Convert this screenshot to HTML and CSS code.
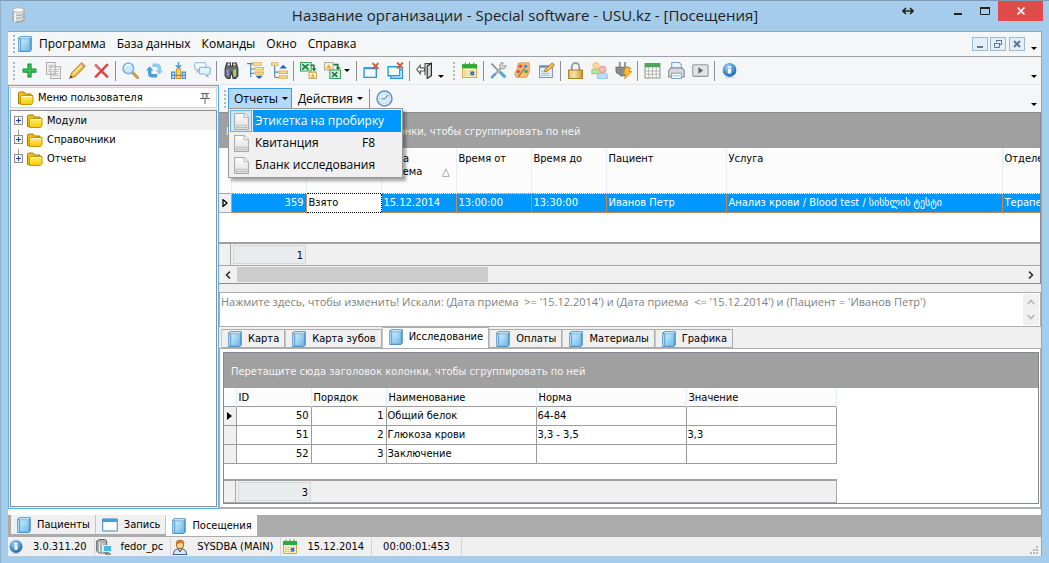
FILE: index.html
```html
<!DOCTYPE html>
<html lang="ru">
<head>
<meta charset="utf-8">
<meta name="viewport" content="width=device-width, initial-scale=1">
<title>Название организации - Special software - USU.kz - [Посещения]</title>
<link rel="stylesheet" href="styles.css">
</head>
<body>
<svg class="defs" aria-hidden="true">
  <defs>
    <linearGradient id="gBlue" x1="0" y1="0" x2="1" y2="1"><stop offset="0" stop-color="#cdeefb"/><stop offset="1" stop-color="#6fb6e6"/></linearGradient>
    <linearGradient id="gFolder" x1="0" y1="0" x2="0" y2="1"><stop offset="0" stop-color="#fff27a"/><stop offset="1" stop-color="#f5c800"/></linearGradient>
    <linearGradient id="gPage" x1="0" y1="0" x2="0" y2="1"><stop offset="0" stop-color="#fff"/><stop offset="1" stop-color="#dcdcdc"/></linearGradient>
    <radialGradient id="gInfo" cx=".4" cy=".3" r=".7"><stop offset="0" stop-color="#9fd6fa"/><stop offset="1" stop-color="#1868b4"/></radialGradient>
    <linearGradient id="gLock" x1="0" y1="0" x2="1" y2="0"><stop offset="0" stop-color="#e3c269"/><stop offset=".4" stop-color="#f7e3a4"/><stop offset="1" stop-color="#c79b35"/></linearGradient>
  </defs>
  <symbol id="book" viewBox="0 0 14 16"><path d="M.7 2L2 .7h11.300v13.300L12 15.500H.7z" fill="#4c98d4" stroke="#3f86c0" stroke-width=".8"/><path d="M1.500 3v12" stroke="#a9d6f2" stroke-width="1.200"/><path d="M3 3h8.700v11.500H3z" fill="url(#gBlue)" stroke="#7fbde6" stroke-width=".8"/><path d="M2 1.800h10.500" stroke="#e3f4fc" stroke-width="1.200"/></symbol>
  <symbol id="folder" viewBox="0 0 16 14"><path d="M.5 12.500V2l1-1h4.500l1.500 2h5.500v10z" fill="#f3bd11" stroke="#a87a00"/><path d="M2.500 13.500V5.500l1-1h11.500v7l-1.500 2z" fill="url(#gFolder)" stroke="#c99500"/><path d="M4 5.500h10" stroke="#fffbc8"/></symbol>
  <symbol id="doc" viewBox="0 0 16 16"><path d="M1.500.5h9l4 4v11h-13z" fill="url(#gPage)" stroke="#a9a9a9"/><path d="M10.500.5v4h4" fill="#fff" stroke="#b5b5b5"/><path d="M3.500 11.500h9v2h-9z" fill="#f3f3f3" stroke="#bdbdbd"/></symbol>
  <symbol id="db" viewBox="0 0 14 16"><path d="M1 3v10c0 3.300 11 3.300 11 0V3z" fill="#e2e2e2" stroke="#9c9c9c"/><ellipse cx="6.500" cy="3" rx="5.500" ry="2.200" fill="#f9f9f9" stroke="#b5b5b5"/><path d="M1 6c0 3 11 3 11 0M1 9c0 3 11 3 11 0M1 12c0 3 11 3 11 0" fill="none" stroke="#9b9b9b"/><path d="M3 6v9" stroke="#fff" stroke-width="2" opacity=".7"/></symbol>
  <symbol id="plus" viewBox="0 0 16 16"><path d="M6.500 2h3v4.500H14v3H9.500V14h-3V9.500H2v-3h4.500z" fill="#3fc35a" stroke="#13942f"/></symbol>
  <symbol id="copy" viewBox="0 0 16 16"><path d="M1.500.5h8v11h-8zM5.500 4.500h9v11h-9z" fill="#f7f7f7" stroke="#ababab"/><path d="M3 3h5M3 5h2M3 7h2M3 9h2M7 7h6M7 9h6M7 11h6M7 13h6" stroke="#bdbdbd"/></symbol>
  <symbol id="pencil" viewBox="0 0 16 16"><path d="M.7 15.300l1.800-5 9.500-9.500 3.200 3.200-9.500 9.500z" fill="#f8c548" stroke="#c78a22"/><path d="M10.500 2.300l3.200 3.200 1.600-1.600L12 .7z" fill="#e59583"/><path d="M4 11l8-8" stroke="#fff0a8" stroke-width="1.300"/><path d="M.7 15.300l1-2.800 1.800 1.800z" fill="#444"/></symbol>
  <symbol id="cross" viewBox="0 0 16 16"><path d="M2 2.500l12 12M14 2L2 14.500" stroke="#dc4242" stroke-width="2.200"/><path d="M2 2.500l5 5" stroke="#f08585"/></symbol>
  <symbol id="lens" viewBox="0 0 16 16"><path d="M10 10l5 5" stroke="#cf9a55" stroke-width="3" stroke-linecap="round"/><circle cx="6" cy="6" r="5" fill="#c7e9fb" stroke="#7db4de" stroke-width="1.500"/><path d="M3 5a3.500 3.500 0 0 1 5-2" fill="none" stroke="#fff" stroke-width="1.500"/></symbol>
  <symbol id="refresh" viewBox="0 0 16 16"><path d="M12.500 9V5.500Q12.500 3 10 3H6" fill="none" stroke="#8ccbf2" stroke-width="3.200"/><path d="M9 8h7l-3.500 4z" fill="#8ccbf2"/><path d="M3.500 7v3.500Q3.500 13 6 13h4.500" fill="none" stroke="#469fdc" stroke-width="3.200"/><path d="M0 8h7L3.500 4z" fill="#469fdc"/></symbol>
  <symbol id="columns" viewBox="0 0 16 16"><path d="M8 0v5M5.500 3L8 5.500 10.500 3" fill="none" stroke="#4a9bd6" stroke-width="1.400"/><path d="M1.500 9.500h3v6h-3zM11.500 9.500h3v6h-3z" fill="#bfe2fa" stroke="#3a8bd1"/><path d="M6 6.500h4v9H6z" fill="#f9d55b" stroke="#d79a1e"/><path d="M1 12.500h14" stroke="#3a8bd1"/></symbol>
  <symbol id="chat" viewBox="0 0 16 16"><path d="M2 .7h8q1.300 0 1.300 1.300v3.500q0 1.500-1.300 1.500H5L3 9.500V7H2Q.7 7 .7 5.500V2Q.7.7 2 .7z" fill="#f3f9fe" stroke="#8cb9e0"/><path d="M6.500 5h7.500q1.300 0 1.300 1.300V10q0 1.300-1.300 1.300h-1V14l-3-2.700H6.500Q5 11.300 5 10V6.300Q5 5 6.500 5z" fill="#e6f3fc" stroke="#7dafdc"/></symbol>
  <symbol id="binoc" viewBox="0 0 16 16"><path d="M3.500 1h3.500v3h2V1h3.500l1.500 5.500v6.500l-2 2.500H9.500L8 9l-1.500 6.500H4L2 13V6.500z" fill="#6b6b6b" stroke="#333"/><path d="M4.500 7v6" stroke="#8d8af0" stroke-width="2.200"/><path d="M11 7v6.500" stroke="#8fe04c" stroke-width="2.600"/><path d="M4.500 2.200h2M9.700 2.200h2" stroke="#eee" stroke-width="1.600"/></symbol>
  <symbol id="treedown" viewBox="0 0 16 16"><path d="M0 1.500h6M3.500 2v12M4 6.500h3M4 10.500h3" stroke="#3d83c4" fill="none"/><path d="M5.500.7h8v2.300h-8zM7.500 5.200h8v2.300h-8zM7.500 9.500h8v2h-8z" fill="#ffe7a3" stroke="#e8b04c"/><path d="M8 13h7l-3.500 3z" fill="#1763b5"/></symbol>
  <symbol id="treeup" viewBox="0 0 16 16"><path d="M0 1.500h6M3.500 2v12.500M4 9.500h3M4 14.500h3" stroke="#3d83c4" fill="none"/><path d="M.5.7h6v2.300h-6zM7.500 8.500h8v2.200h-8zM7.500 13h8v2.200h-8z" fill="#ffe7a3" stroke="#e8b04c"/><path d="M8 6h7l-3.500-3.500z" fill="#1763b5"/></symbol>
  <symbol id="excel1" viewBox="0 0 16 16"><path d="M.5.5h10v8H.5z" fill="#dff2df" stroke="#39a05a"/><path d="M2 2l6 5M8 2L2 7" stroke="#16894a" stroke-width="1.800"/><path d="M10 3h3v4" fill="none" stroke="#147c37" stroke-width="1.500"/><path d="M11 6h4.500L13.200 9z" fill="#147c37"/><path d="M8.500 9.500h7v6h-7z" fill="#fff1c9" stroke="#c6a665"/><path d="M10 14.500l2-4 2 4z" fill="#f0ad22"/></symbol>
  <symbol id="excel2" viewBox="0 0 16 16"><path d="M.5.5h8v7h-8z" fill="#f5ecd9" stroke="#b8ad9c"/><path d="M2 6l2.500-4L7 6z" fill="#f0ad22"/><path d="M9 2.500h4v3" fill="none" stroke="#147c37" stroke-width="1.500"/><path d="M11 5h4.500L13.200 8z" fill="#147c37"/><path d="M5.500 7.500h10v8h-10z" fill="#dff2df" stroke="#39a05a"/><path d="M7.500 9.500l5 4.500M12.500 9.500l-5 4.500" stroke="#16894a" stroke-width="1.700"/></symbol>
  <symbol id="winclose" viewBox="0 0 16 16"><path d="M1 5.500h11.500v9H1z" fill="#f5fbff" stroke="#2d97dd" stroke-width="1.300"/><path d="M1 6h11" stroke="#2d97dd" stroke-width="1.600"/><path d="M9 1l5.500 5.500M14.500 1L9 6.500" stroke="#cf5a42" stroke-width="1.800"/></symbol>
  <symbol id="wincloseall" viewBox="0 0 16 16"><path d="M3.500 7h11v8.300h-11z" fill="#fff" stroke="#2d97dd" stroke-width="1.300"/><path d="M1 4.500h11v8.500H1z" fill="#f5fbff" stroke="#2d97dd" stroke-width="1.300"/><path d="M9.500.5L15 6M15 .5L9.500 6" stroke="#cf5a42" stroke-width="1.800"/></symbol>
  <symbol id="door" viewBox="0 0 16 16"><path d="M8.500 12.500V1.500h6v11" fill="none" stroke="#444"/><path d="M10.500 4l4-3v12l-4 2.500z" fill="#d5d5d5" stroke="#222"/><path d="M8 5.500H4V3L.7 7 4 11V8.500h4z" fill="#fff" stroke="#555"/></symbol>
  <symbol id="calendar" viewBox="0 0 16 16"><path d="M1.500 2.500h13v12h-13z" fill="#fff0c3" stroke="#d8a647"/><path d="M1 2h14v4H1z" fill="#28ae34"/><path d="M4 .5v3M12 .5v3M8 .5v3" stroke="#777"/><path d="M3 8.500h10M3 10.500h10M3 12.500h10" stroke="#e6b052" stroke-dasharray="1.500 1"/><path d="M9.500 9.500h2.500V12H9.500z" fill="#4aa4ee" stroke="#1b65b4"/></symbol>
  <symbol id="tools" viewBox="0 0 16 16"><path d="M1.500 1.500l6.500 7" stroke="#8a8a8a" stroke-width="1.500"/><path d="M9 9l5.500 5.500" stroke="#5ba8dc" stroke-width="3"/><path d="M4 12.500l7.500-8" stroke="#a8a8a8" stroke-width="2.200"/><path d="M15 3a3 3 0 1 1-2.500-2.500l-1 2 1.500 1.500z" fill="#d8d8d8" stroke="#8c8c8c" stroke-width=".8"/><path d="M1.200 15L5 11" stroke="#4d9bd0" stroke-width="2.200"/></symbol>
  <symbol id="palette" viewBox="0 0 16 16"><path d="M4 1L14 .5l1 7-3 7H2L.7 11l2-4z" fill="#f2b878" stroke="#dd9a60" stroke-width=".8"/><circle cx="6" cy="4" r="1.700" fill="#e3503b"/><circle cx="11" cy="4" r="1.500" fill="#3f87d8"/><circle cx="4" cy="9" r="1.600" fill="#de552c"/><circle cx="11.500" cy="9" r="1.700" fill="#3fae46"/><circle cx="7.500" cy="11.500" r="1.500" fill="#e8e13e"/><path d="M4 14l6-8" stroke="#8a6e5a"/></symbol>
  <symbol id="note" viewBox="0 0 16 16"><path d="M1.500 3.500h12v11h-12z" fill="#eef4fd" stroke="#7492c4"/><path d="M1 4.500h13" stroke="#7492c4" stroke-width="2"/><path d="M3 8.500h5M3 10.500h8M3 12.500h8" stroke="#9cb2d6"/><path d="M6 9l.8-2.500L13.500.8 15.500 3 9 8.500z" fill="#f6bd3f" stroke="#a97325" stroke-width=".8"/></symbol>
  <symbol id="lock" viewBox="0 0 16 16"><path d="M4.500 8V4.500a3.500 3.500 0 0 1 7 0V8" fill="none" stroke="#9b9b9b" stroke-width="1.800"/><path d="M1.500 7.500h13v8h-13z" fill="url(#gLock)" stroke="#a77d22"/></symbol>
  <symbol id="users" viewBox="0 0 16 16"><path d="M.7 11V8.500q0-2 2-2H7q2 0 2 2V11z" fill="#b5e39b" stroke="#86c268" stroke-width=".7"/><circle cx="4.700" cy="3.500" r="3" fill="#fdd99b" stroke="#e5b06d" stroke-width=".7"/><path d="M6 15.500V13q0-2.500 2.500-2.500H13q2.500 0 2.500 2.500v2.500z" fill="#b9e0f7" stroke="#7db9de" stroke-width=".7"/><circle cx="11" cy="7" r="3.200" fill="#f9b9b0" stroke="#e28a80" stroke-width=".7"/></symbol>
  <symbol id="plug" viewBox="0 0 16 16"><path d="M4.500 0v5M9.500 0v5" stroke="#999" stroke-width="2"/><path d="M1 5h12v3q0 3-4 3.500V13H5v-1.500Q1 11 1 8z" fill="#8b8b8b" stroke="#6d6d6d"/><path d="M10 5l5 1-2 3h3l-7 7 1.500-4.500H8z" fill="#ffc22e" stroke="#dd8721" stroke-width=".8"/></symbol>
  <symbol id="table" viewBox="0 0 16 16"><path d="M1 1.500h14v13.500H1z" fill="#fff" stroke="#7ba07b"/><path d="M1 1h14v4H1z" fill="#4ba65c"/><path d="M1 8.500h14M1 11.500h14M4.500 5v10M8 5v10M11.500 5v10" stroke="#b3b3b3"/></symbol>
  <symbol id="printer" viewBox="0 0 16 16"><path d="M3.500 7V.5h7l2 2V7" fill="#edf6fe" stroke="#7ea2c6"/><path d="M.7 8l2-2.500h10.600l2 2.500v6H.7z" fill="#d5d8dc" stroke="#838991"/><path d="M3.500 10.500h9v5h-9z" fill="#fff" stroke="#7ea2c6"/><path d="M5 13h6" stroke="#8dbde6"/></symbol>
  <symbol id="play" viewBox="0 0 16 16"><rect x=".7" y="2.500" width="14.500" height="11" rx="1" fill="#dfe3e1" stroke="#93999a"/><path d="M6 5v6l4.500-3z" fill="#5c6364"/></symbol>
  <symbol id="info" viewBox="0 0 16 16"><circle cx="8" cy="7.500" r="6.500" fill="url(#gInfo)"/><path d="M6.500 4h3v1.500h-3zM6.500 6.300h3v4.500h-3z" fill="#fff"/><path d="M4 14.500h8" stroke="#c3cfda"/></symbol>
  <symbol id="clock" viewBox="0 0 16 16"><circle cx="8" cy="8" r="7" fill="#eaf3fc" stroke="#5d93cd" stroke-width="1.500"/><circle cx="8" cy="8" r="5" fill="#dcebfa" stroke="#b7d3ee" stroke-width=".7"/><path d="M11.500 4.500L8 8.500 5 8" fill="none" stroke="#678fb8"/></symbol>
  <symbol id="pin" viewBox="0 0 12 12"><path d="M2 1.500h8M4 2v4M8 2v4M1 6.500h10M6 7v5" stroke="#666" fill="none"/><path d="M7 2v4" stroke="#888"/></symbol>
  <symbol id="window" viewBox="0 0 16 14"><path d="M.7 1h14.500v12H.7z" fill="#fff" stroke="#3e86bd"/><path d="M.5 2.500h15" stroke="#4d9ad4" stroke-width="3"/></symbol>
  <symbol id="server" viewBox="0 0 16 16"><path d="M.7 2l3-1.500h5l2 1.500v12H3L.7 12z" fill="#aeb0b1" stroke="#5c5e60"/><path d="M3.500 3v11M6.500 4v10" stroke="#e6e6e6"/><path d="M7.500 6.500h8v6h-8z" fill="#48b6f0" stroke="#e4edf3"/><path d="M9 15h6M12 13v2" stroke="#777" stroke-width="1.500"/></symbol>
  <symbol id="person" viewBox="0 0 16 16"><path d="M1 15.500l1.500-4L6 9.500h4l3.500 2 1.500 4z" fill="#dbe7f5" stroke="#3d5c8a"/><circle cx="8" cy="6" r="3.700" fill="#fbd493" stroke="#a4622a"/><path d="M4 6Q3 .7 8 .7T12 6L9.500 3.500z" fill="#c97a2c"/><path d="M6 10l2 3 2-3" fill="#f5b44b" stroke="#3d5c8a"/></symbol>
</svg>

<div class="app">
  <header class="titlebar">
    <svg class="icon title-icon"><use href="#db"/></svg>
    <h1 class="title">Название организации - Special software - USU.kz - [Посещения]</h1>
    <div class="win-buttons">
      <button class="win-btn move" aria-label="Переместить"><svg class="glyph" viewBox="0 0 12 8"><path d="M2 4h8M4 1L1 4l3 3M8 1l3 3-3 3" fill="none" stroke="#222" stroke-width="1.600"/></svg></button>
      <button class="win-btn" aria-label="Свернуть"><svg class="glyph" viewBox="0 0 12 8"><path d="M2 7h8" stroke="#222" stroke-width="2"/></svg></button>
      <button class="win-btn" aria-label="Развернуть"><svg class="glyph" viewBox="0 0 12 8"><path d="M1.500 1h9v6.500h-9z" fill="none" stroke="#222"/><path d="M1 1h10" stroke="#222" stroke-width="2"/></svg></button>
      <button class="win-btn close" aria-label="Закрыть"><svg class="glyph" viewBox="0 0 12 8"><path d="M2.500.5l7 7M9.500.5l-7 7" stroke="#fff" stroke-width="1.600"/></svg></button>
    </div>
  </header>

  <div class="client">
    <nav class="menubar">
      <span class="grip"></span>
      <svg class="icon book"><use href="#book"/></svg>
      <button class="menu-item">Программа</button>
      <button class="menu-item">База данных</button>
      <button class="menu-item">Команды</button>
      <button class="menu-item">Окно</button>
      <button class="menu-item">Справка</button>
      <div class="mdi-buttons">
        <button class="mdi-btn" aria-label="Свернуть окно"><svg class="glyph" viewBox="0 0 12 8"><path d="M3 7h6" stroke="#5d7890" stroke-width="2"/></svg></button>
        <button class="mdi-btn" aria-label="Восстановить окно"><svg class="glyph" viewBox="0 0 12 8"><path d="M4.500 2V.5h5v4H8M2.500 3.500h5v4h-5z" fill="none" stroke="#5d7890"/><path d="M4 .5h6M2 3.500h6" stroke="#5d7890"/></svg></button>
        <button class="mdi-btn last" aria-label="Закрыть окно"><svg class="glyph" viewBox="0 0 12 8"><path d="M3 1l6 6M9 1L3 7" stroke="#5d7890" stroke-width="2"/></svg></button>
      </div>
      <span class="caret corner"></span>
    </nav>

    <div class="toolbar" role="toolbar" aria-label="Команды">
      <span class="grip"></span>
      <button class="tool" aria-label="Добавить"><svg class="icon"><use href="#plus"/></svg></button>
      <button class="tool" aria-label="Копировать"><svg class="icon"><use href="#copy"/></svg></button>
      <button class="tool" aria-label="Изменить"><svg class="icon"><use href="#pencil"/></svg></button>
      <button class="tool" aria-label="Удалить"><svg class="icon"><use href="#cross"/></svg></button>
      <span class="sep"></span>
      <button class="tool" aria-label="Поиск"><svg class="icon"><use href="#lens"/></svg></button>
      <button class="tool" aria-label="Обновить"><svg class="icon"><use href="#refresh"/></svg></button>
      <button class="tool" aria-label="Столбцы"><svg class="icon"><use href="#columns"/></svg></button>
      <button class="tool" aria-label="Сообщения"><svg class="icon"><use href="#chat"/></svg></button>
      <span class="sep"></span>
      <button class="tool" aria-label="Найти"><svg class="icon"><use href="#binoc"/></svg></button>
      <button class="tool" aria-label="Раскрыть"><svg class="icon"><use href="#treedown"/></svg></button>
      <button class="tool" aria-label="Свернуть"><svg class="icon"><use href="#treeup"/></svg></button>
      <span class="sep"></span>
      <button class="tool" aria-label="Экспорт"><svg class="icon"><use href="#excel1"/></svg></button>
      <button class="tool split" aria-label="Импорт"><svg class="icon"><use href="#excel2"/></svg><span class="caret"></span></button>
      <span class="sep"></span>
      <button class="tool" aria-label="Закрыть окно"><svg class="icon"><use href="#winclose"/></svg></button>
      <button class="tool" aria-label="Закрыть все"><svg class="icon"><use href="#wincloseall"/></svg></button>
      <span class="sep"></span>
      <button class="tool" aria-label="Выход"><svg class="icon"><use href="#door"/></svg></button>
      <span class="caret low"></span>
      <span class="grip second"></span>
      <button class="tool" aria-label="Календарь"><svg class="icon"><use href="#calendar"/></svg></button>
      <span class="sep"></span>
      <button class="tool" aria-label="Настройки"><svg class="icon"><use href="#tools"/></svg></button>
      <button class="tool" aria-label="Оформление"><svg class="icon"><use href="#palette"/></svg></button>
      <button class="tool" aria-label="Заметка"><svg class="icon"><use href="#note"/></svg></button>
      <span class="sep"></span>
      <button class="tool" aria-label="Блокировка"><svg class="icon"><use href="#lock"/></svg></button>
      <button class="tool" aria-label="Пользователи"><svg class="icon"><use href="#users"/></svg></button>
      <button class="tool" aria-label="Подключение"><svg class="icon"><use href="#plug"/></svg></button>
      <span class="sep"></span>
      <button class="tool" aria-label="Таблица"><svg class="icon"><use href="#table"/></svg></button>
      <button class="tool" aria-label="Печать"><svg class="icon"><use href="#printer"/></svg></button>
      <button class="tool" aria-label="Запуск"><svg class="icon"><use href="#play"/></svg></button>
      <span class="sep"></span>
      <button class="tool" aria-label="О программе"><svg class="icon"><use href="#info"/></svg></button>
      <span class="caret corner"></span>
    </div>

    <div class="workspace">
      <aside class="sidebar">
        <div class="side-head">
          <svg class="icon folder"><use href="#folder"/></svg>
          <h2 class="side-title">Меню пользователя</h2>
          <button class="pin" aria-label="Закрепить"><svg class="icon small"><use href="#pin"/></svg></button>
        </div>
        <ul class="tree">
          <li class="node"><button class="expander" aria-label="Развернуть Модули"></button><svg class="icon folder"><use href="#folder"/></svg><span class="node-label selected">Модули</span></li>
          <li class="node"><button class="expander" aria-label="Развернуть Справочники"></button><svg class="icon folder"><use href="#folder"/></svg><span class="node-label">Справочники</span></li>
          <li class="node"><button class="expander" aria-label="Развернуть Отчеты"></button><svg class="icon folder"><use href="#folder"/></svg><span class="node-label">Отчеты</span></li>
        </ul>
      </aside>

      <main class="content">
        <div class="actionbar">
          <span class="grip"></span>
          <div class="dropdown">
            <button class="drop-btn open" aria-expanded="true">Отчеты<span class="caret"></span></button>
            <div class="popup" role="menu">
              <button class="popup-item active" role="menuitem"><span class="popup-icon"><svg class="icon"><use href="#doc"/></svg></span><span class="popup-label">Этикетка на пробирку</span></button>
              <button class="popup-item" role="menuitem"><span class="popup-icon"><svg class="icon"><use href="#doc"/></svg></span><span class="popup-label">Квитанция</span><kbd class="hotkey">F8</kbd></button>
              <button class="popup-item" role="menuitem"><span class="popup-icon"><svg class="icon"><use href="#doc"/></svg></span><span class="popup-label">Бланк исследования</span></button>
            </div>
          </div>
          <button class="drop-btn">Действия<span class="caret"></span></button>
          <span class="sep"></span>
          <button class="tool" aria-label="История"><svg class="icon"><use href="#clock"/></svg></button>
          <span class="caret corner"></span>
        </div>

        <section class="grid">
          <div class="group-panel">Перетащите сюда заголовок колонки, чтобы сгруппировать по ней</div>
          <div class="grid-body">
            <table class="visits">
              <colgroup><col class="c-mark"><col class="c75"><col class="c75"><col class="c75"><col class="c75"><col class="c75"><col class="c120"><col class="c276"><col class="c150"></colgroup>
              <thead><tr><th></th><th></th><th></th><th><div class="sorted"><span>Дата<br>приема</span><span class="sort">△</span></div></th><th>Время от</th><th>Время до</th><th>Пациент</th><th>Услуга</th><th>Отделение</th></tr></thead>
              <tbody><tr><td class="mark"><svg class="arrow" viewBox="0 0 6 8"><path d="M1 0v8M1 .5L5 4 1 7.500" fill="none" stroke="#000" stroke-width="1.300"/></svg></td><td class="num">359</td><td class="focus">Взято</td><td>15.12.2014</td><td>13:00:00</td><td>13:30:00</td><td>Иванов Петр</td><td>Анализ крови / Blood test / სისხლის ტესტი</td><td>Терапевт</td></tr></tbody>
            </table>
          </div>
          <div class="grid-foot"><span class="foot-mark"></span><span class="foot-cell">1</span></div>
          <div class="hscroll">
            <button class="hs-btn" aria-label="Влево"><svg class="arrow" viewBox="0 0 6 8"><path d="M5 .7L1.500 4 5 7.300" fill="none" stroke="#333" stroke-width="1.600"/></svg></button>
            <div class="hs-track"><div class="hs-thumb"></div></div>
            <button class="hs-btn" aria-label="Вправо"><svg class="arrow" viewBox="0 0 6 8"><path d="M1 .7L4.500 4 1 7.300" fill="none" stroke="#333" stroke-width="1.600"/></svg></button>
          </div>
        </section>

        <div class="filter">
          <textarea class="filter-text" aria-label="Условия поиска" readonly>Нажмите здесь, чтобы изменить! Искали: (Дата приема  &gt;= '15.12.2014') и (Дата приема  &lt;= '15.12.2014') и (Пациент = 'Иванов Петр')</textarea>
          <div class="vscroll">
            <button class="vs-btn" aria-label="Вверх"><svg class="chev" viewBox="0 0 8 6"><path d="M.7 5L4 1.500 7.300 5" fill="none" stroke="#b5b5b5" stroke-width="1.600"/></svg></button>
            <button class="vs-btn" aria-label="Вниз"><svg class="chev" viewBox="0 0 8 6"><path d="M.7 1L4 4.500 7.300 1" fill="none" stroke="#b5b5b5" stroke-width="1.600"/></svg></button>
          </div>
        </div>

        <div class="tabs" role="tablist">
          <button class="tab" role="tab"><svg class="icon book"><use href="#book"/></svg>Карта</button>
          <button class="tab" role="tab"><svg class="icon book"><use href="#book"/></svg>Карта зубов</button>
          <button class="tab current" role="tab" aria-selected="true"><svg class="icon book"><use href="#book"/></svg>Исследование</button>
          <button class="tab" role="tab"><svg class="icon book"><use href="#book"/></svg>Оплаты</button>
          <button class="tab" role="tab"><svg class="icon book"><use href="#book"/></svg>Материалы</button>
          <button class="tab" role="tab"><svg class="icon book"><use href="#book"/></svg>Графика</button>
        </div>
        <div class="tab-page">
          <section class="subgrid">
            <div class="group-panel">Перетащите сюда заголовок колонки, чтобы сгруппировать по ней</div>
            <table class="tests">
              <colgroup><col class="c-mark"><col class="c75"><col class="c75"><col class="c150"><col class="c150"><col class="c150"></colgroup>
              <thead><tr><th></th><th>ID</th><th>Порядок</th><th>Наименование</th><th>Норма</th><th>Значение</th></tr></thead>
              <tbody>
                <tr><td class="mark"><svg class="arrow" viewBox="0 0 6 8"><path d="M0 0l5 4-5 4z"/></svg></td><td class="num">50</td><td class="num">1</td><td>Общий белок</td><td>64-84</td><td></td></tr>
                <tr><td class="mark"></td><td class="num">51</td><td class="num">2</td><td>Глюкоза крови</td><td>3,3 - 3,5</td><td>3,3</td></tr>
                <tr><td class="mark"></td><td class="num">52</td><td class="num">3</td><td>Заключение</td><td></td><td></td></tr>
              </tbody>
            </table>
            <div class="grid-foot short"><span class="foot-mark"></span><span class="foot-cell">3</span></div>
          </section>
        </div>
      </main>
    </div>

    <div class="mdi-tabs" role="tablist">
      <button class="mdi-tab" role="tab"><svg class="icon book"><use href="#book"/></svg>Пациенты</button>
      <button class="mdi-tab" role="tab"><svg class="icon folder"><use href="#window"/></svg>Запись</button>
      <button class="mdi-tab current" role="tab" aria-selected="true"><svg class="icon book"><use href="#book"/></svg>Посещения</button>
    </div>
    <footer class="status">
      <span class="stat"><svg class="icon"><use href="#info"/></svg>3.0.311.20</span>
      <span class="stat"><svg class="icon"><use href="#server"/></svg>fedor_pc</span>
      <span class="stat"><svg class="icon"><use href="#person"/></svg>SYSDBA (MAIN)</span>
      <span class="stat"><svg class="icon"><use href="#calendar"/></svg>15.12.2014</span>
      <span class="stat plain">00:00:01:453</span>
      <svg class="sizer" viewBox="0 0 8 8"><path d="M6 0h2v2H6zM3 3h2v2H3zM6 3h2v2H6zM0 6h2v2H0zM3 6h2v2H3zM6 6h2v2H6z" fill="#b9b9b9"/></svg>
    </footer>
  </div>
</div>
</body>
</html>
```
FILE: styles.css
```css
* { box-sizing: border-box; }
body {
  margin: 0;
  font: 11px/14px "DejaVu Sans Condensed", "DejaVu Sans", sans-serif;
  color: #000;
  background: #a5cceb;
}
button {
  margin: 0;
  padding: 0;
  border: 0;
  background: none;
  font: inherit;
  color: inherit;
  text-align: left;
  white-space: nowrap;
}
.defs { position: absolute; width: 0; height: 0; }
.icon { width: 17px; height: 17px; flex: none; display: block; }
.icon.book { width: 14px; height: 16px; }
.icon.folder { width: 16px; height: 14px; }
.icon.small { width: 12px; height: 12px; }
.glyph { width: 12px; height: 8px; display: block; }
.arrow { width: 6px; height: 8px; display: block; margin: auto; }
.chev { width: 8px; height: 6px; display: block; margin: auto; }

.app {
  min-height: 100vh;
  display: flex;
  flex-direction: column;
  padding: 0 7px 7px;
  border-top: 1px solid #7d9bb5;
  border-left: 1px solid #8fb0cb;
}
.titlebar { height: 30px; display: flex; align-items: flex-start; }
.title-icon { width: 14px; height: 16px; margin: 6px 0 0 4px; }
.title {
  flex: 1;
  margin: 4px 0 0 130px;
  text-align: center;
  font: 15px/20px "Open Sans", sans-serif;
  color: #222;
  white-space: nowrap;
}
.win-buttons { display: flex; margin-right: -1px; }
.win-btn { width: 27px; height: 20px; display: flex; align-items: center; justify-content: center; }
.win-btn.move { margin-right: 23px; }
.win-btn.close { width: 45px; background: #e04b4b; }

.client {
  flex: 1;
  display: flex;
  flex-direction: column;
  background: #f0f0f0;
  border: 1px solid #8aa9c0;
  border-width: 1px 1px 0 0;
}
.menubar, .toolbar, .actionbar {
  display: flex;
  align-items: center;
  background: #f5f6f7;
  font: 12px/16px "Open Sans", sans-serif;
}
.menubar { height: 25px; gap: 11px; padding: 0 4px 0 5px; border-bottom: 1px solid #9da0a4; }
.menubar .book { margin: 0 -4px 0 -8px; }
.toolbar { height: 28px; padding: 0 4px 0 5px; border-bottom: 1px solid #e4e6e9; }
.grip {
  width: 2px;
  height: 18px;
  flex: none;
  background: repeating-linear-gradient(#b4b6b8 0 2px, transparent 2px 4px);
}
.toolbar .grip { margin-right: 2px; }
.toolbar .grip.second { margin: 0 2px 0 9px; }
.tool { width: 24px; height: 22px; display: flex; align-items: center; justify-content: center; flex: none; }
.tool.split { width: 34px; gap: 3px; }
.sep { width: 1px; height: 20px; margin: 0 2px; background: #8b8d90; flex: none; }
.caret { flex: none; width: 0; border: 3px solid transparent; border-top: 3px solid #000; border-bottom: 0; }
.caret.low { align-self: flex-end; margin: 0 0 6px 2px; }
.caret.corner { align-self: flex-end; margin: 0 0 6px auto; }
.mdi-buttons { display: flex; gap: 2px; margin-left: auto; }
.mdi-buttons + .caret.corner { margin-left: -5px; }
.mdi-btn { width: 16px; height: 14px; display: flex; align-items: center; justify-content: center; background: #e3eff9; border: 1px solid #9db9cf; }
.mdi-btn.last { margin-left: 1px; }

.workspace { flex: 1; display: flex; border-bottom: 1px solid #b0b0b0; }
.sidebar { width: 211px; flex: none; display: flex; flex-direction: column; gap: 2px; padding: 1px; border: 1px solid #55b3f3; margin-bottom: -1px; }
.side-head { display: flex; align-items: center; height: 21px; gap: 4px; padding: 0 5px 0 7px; background: #fff; border: 1px solid #d4d4d4; }
.side-title { flex: 1; margin: 0; font: inherit; }
.tree { flex: 1; list-style: none; margin: 0; padding: 0 0 0 3px; background: #fff; border: 1px solid #8d8f94; }
.node { height: 19px; display: flex; align-items: center; gap: 4px; }
.node + .node { background: linear-gradient(#9a9a9a, #9a9a9a) 4px 0 / 1px 5px no-repeat; }
.expander { width: 9px; height: 9px; flex: none; border: 1px solid #8d8f94; background: linear-gradient(#24479e, #24479e) center / 5px 1px no-repeat, linear-gradient(#24479e, #24479e) center / 1px 5px no-repeat, #f2f2f2; }
.node-label { flex: 1; line-height: 19px; }
.node-label.selected { background: #f0f0f0; }

.content { flex: 1; min-width: 0; display: flex; flex-direction: column; }
.actionbar { height: 27px; padding: 0 4px 0 5px; }
.actionbar .grip { margin-right: 2px; }
.dropdown { position: relative; }
.drop-btn { height: 21px; padding: 0 3px 0 5px; border: 1px solid transparent; display: flex; align-items: center; gap: 4px; }
.drop-btn.open { background: #b2d9f7; border-color: #3b9ce0; }
.popup {
  position: absolute;
  top: 20px;
  left: 0;
  z-index: 2;
  width: 175px;
  padding: 1px;
  background: #f0f0f0;
  border: 1px solid #979797;
  box-shadow: 3px 3px 3px rgba(0, 0, 0, .35);
}
.popup-item { width: 100%; height: 22px; display: flex; align-items: center; }
.popup-icon { width: 22px; height: 22px; display: flex; align-items: center; justify-content: center; border: 1px solid transparent; margin-right: 1px; }
.popup-label { flex: 1; line-height: 22px; padding-left: 2px; }
.active .popup-icon { border-color: #5db2ee; background: #cfe6f8; }
.active .popup-label { background: #0098ff; color: #fff; }
.hotkey { font: inherit; margin-right: 26px; }

.grid { display: flex; flex-direction: column; background: #fff; border: 1px solid #8a8c92; border-left: 0; }
.group-panel { height: 35px; padding: 0 7px; line-height: 37px; background: #a0a0a0; color: #f4f4f4; white-space: nowrap; overflow: hidden; }
.grid-body { height: 94px; overflow: hidden; }
table { border-collapse: collapse; table-layout: fixed; }
.visits { width: 933px; }
.tests { width: 612px; }
.c-mark { width: 12px; }
.c75 { width: 75px; }
.c120 { width: 120px; }
.c150 { width: 150px; }
.c276 { width: 276px; }
th { font-weight: normal; text-align: left; vertical-align: top; padding: 4px 2px 2px; background: #fcfcfc; border-right: 1px solid #e2effb; overflow: hidden; white-space: nowrap; }
.visits thead tr { height: 45px; }
.sorted { display: flex; justify-content: space-between; align-items: flex-end; padding-right: 4px; line-height: 13px; }
.sort { color: #777; }
td { height: 19px; padding: 0 2px; white-space: nowrap; overflow: hidden; border-right: 1px solid #9c9c9c; }
.visits td { background: #0098ff; color: #fff; border: 1px solid #c8875a; border-left-width: 0; border-bottom: 1px solid #c8875a; border-top: 1px dotted #ff7800; }
.visits td.mark, td.mark { padding: 0; background: #f0f0f0; border: 1px solid #a8a8a8; border-left: 0; }
.visits td.focus { background: #fff; color: #000; border: 1px dotted #000; }
.num { text-align: right; }
.tests th { padding: 3px 2px 1px; height: 18px; }
.tests td { border: 1px solid #9c9c9c; padding: 0 1px; }
.tests td.num { padding-right: 2px; }
.tests td.mark { border-left: 0; }

.grid-foot { height: 24px; display: flex; gap: 2px; background: #f0f0f0; border-top: 2px solid #a0a0a0; border-bottom: 1px solid #a8a8a8; }
.foot-mark { width: 12px; border-right: 1px solid #a8a8a8; }
.foot-cell { width: 73px; margin: 1px 0; text-align: right; line-height: 19px; padding-right: 2px; background: #e8eced; border: 1px solid #d4d8d8; }
.hscroll { height: 17px; display: flex; background: #f0f0f0; }
.hs-btn { width: 18px; flex: none; }
.hs-track { flex: 1; padding: 1px 0; }
.hs-thumb { width: 32%; height: 15px; background: #cdcdcd; }

.filter { height: 35px; margin: 8px 0 0; display: flex; background: #fff; border: 1px solid #adadb0; }
.filter-text { flex: 1; resize: none; overflow: hidden; border: 0; padding: 2px 1px; font: 11px/14px "Open Sans", sans-serif; color: #808080; background: transparent; outline: 0; white-space: pre-wrap; }
.vscroll { width: 16px; margin: 1px; background: #f0f0f0; display: flex; flex-direction: column; }
.vs-btn { flex: 1; }

.tabs { display: flex; align-items: flex-end; padding-left: 2px; height: 21px; position: relative; z-index: 1; }
.tab { height: 19px; display: flex; align-items: center; gap: 6px; padding: 1px 5px 0 6px; border: 1px solid #adadb0; border-left-color: #c8c8c8; background: #f0f0f0; }
.tab.current { height: 21px; background: #fff; border-bottom: 0; padding-bottom: 3px; }
.tab-page { flex: 1; display: flex; padding: 3px 1px 3px 3px; background: #fff; border: 1px solid #adadb0; }
.subgrid { flex: 1; min-width: 0; display: flex; flex-direction: column; border: 1px solid #85888e; background: #fff; }
.short { width: 613px; margin-top: auto; border-right: 1px solid #a8a8a8; }

.mdi-tabs { display: flex; height: 28px; padding: 0 3px; background: linear-gradient(#fff 6px, #ababab 6px); align-items: flex-end; }
.mdi-tab { height: 19px; display: flex; align-items: center; gap: 6px; padding: 0 5px 0 6px; margin-bottom: 3px; background: #f0f0f0; border-right: 1px solid #c4c4c4; }
.mdi-tab.current { height: 21px; margin-bottom: 1px; background: #fff; border: 0; }
.status { height: 19px; display: flex; align-items: center; background: #f0f0f0; }
.stat { display: flex; align-items: center; gap: 9px; padding: 0 7px 0 0; margin-right: 1px; border-right: 1px solid #d4d4d4; height: 18px; white-space: nowrap; }
.stat .icon { width: 16px; height: 16px; }
.stat.plain { padding: 0 11px 0 10px; }
.sizer { width: 8px; height: 8px; margin: 6px 3px 0 auto; }
```
